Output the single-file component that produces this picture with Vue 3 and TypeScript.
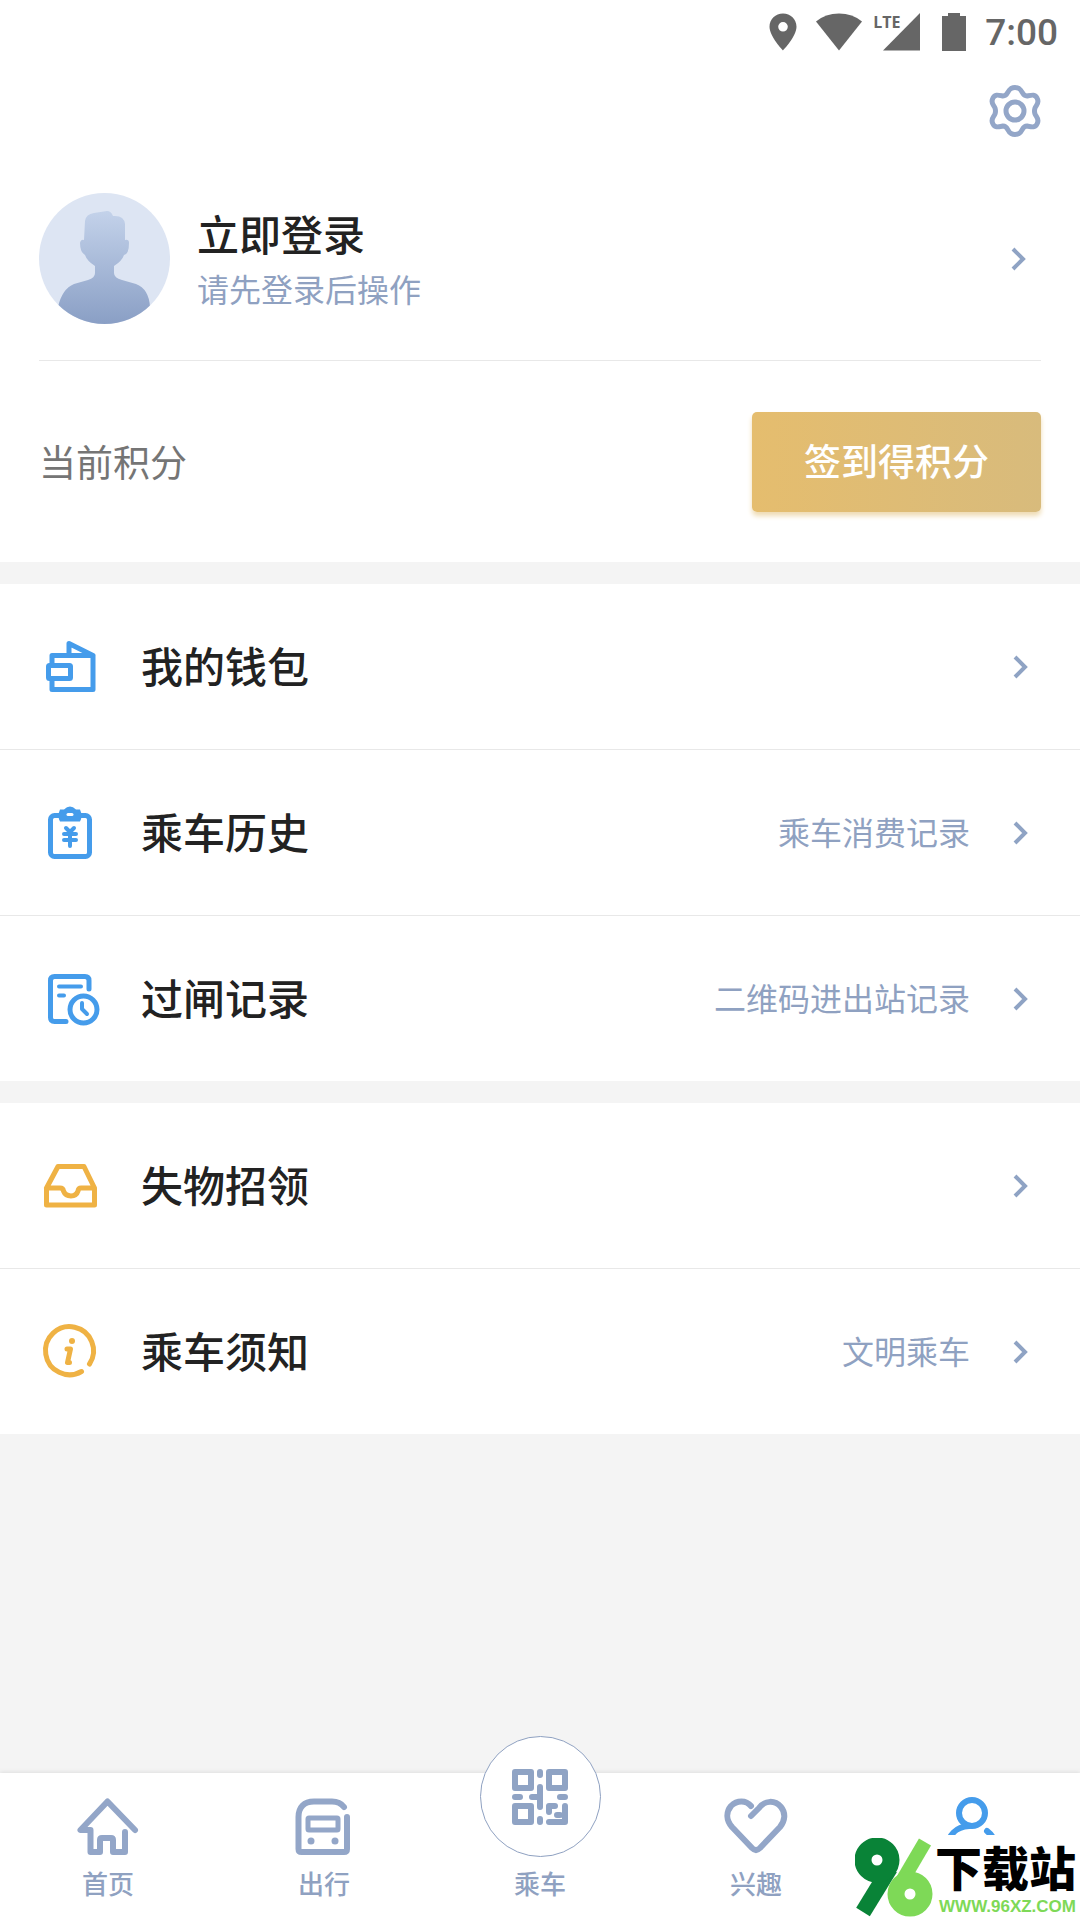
<script setup lang="ts">
interface MenuRow {
  icon: 'wallet' | 'history' | 'gate' | 'lost' | 'notice'
  title: string
  note?: string
}

const groups: MenuRow[][] = [
  [
    { icon: 'wallet', title: '我的钱包' },
    { icon: 'history', title: '乘车历史', note: '乘车消费记录' },
    { icon: 'gate', title: '过闸记录', note: '二维码进出站记录' },
  ],
  [
    { icon: 'lost', title: '失物招领' },
    { icon: 'notice', title: '乘车须知', note: '文明乘车' },
  ],
]
</script>

<template>
  <div class="app">
    <header class="status">
      <svg width="28" height="38" viewBox="0 0 28 38" aria-hidden="true">
        <path fill="#666" fill-rule="evenodd" d="M14 0.5C6.500.5.5 6.300.5 13.800.5 23.500 14 37.500 14 37.500S27.500 23.500 27.500 13.800C27.500 6.300 21.500.5 14 .5zM14 9a4.800 4.800 0 1 1 0 9.600a4.800 4.800 0 0 1 0-9.600z" />
      </svg>
      <svg class="wifi" width="46" height="38" viewBox="0 0 46 38" aria-hidden="true">
        <path fill="#666" d="M0 8.500Q9.500.5 23 .5T46 8.500L23 37.500z" />
      </svg>
      <span class="signal">
        <span class="lte">LTE</span>
        <svg width="38" height="38" viewBox="0 0 38 38" aria-hidden="true"><path fill="#666" d="M38 0V37.500H1z" /></svg>
      </span>
      <svg class="battery" width="24" height="38" viewBox="0 0 24 38" aria-hidden="true">
        <path fill="#666" d="M6 0H18V3H24V38H0V3H6z" />
      </svg>
      <span class="time">7:00</span>
    </header>

    <main class="content">
      <section class="profile">
        <div class="tools">
          <button class="plain" type="button" aria-label="设置">
            <svg width="54" height="54" viewBox="0 0 54 54" fill="none" stroke="#93a6c8" stroke-width="5" stroke-linejoin="round">
              <path d="M24 4.500Q28 2.500 32 4.500C36 7 35 12 40 12C45 11 48 10 50 14C53 19 49 21 48 24Q47 27 48 30C49 33 53 35 50 40C48 44 45 43 40 42C35 42 36 47 32 49.500Q28 51.500 24 49.500C20 47 21 42 16 42C11 43 8 44 6 40C3 35 7 33 8 30Q9 27 8 24C7 21 3 19 6 14C8 10 11 11 16 12C21 12 20 7 24 4.500z" />
              <circle cx="28" cy="27" r="9" />
            </svg>
          </button>
        </div>
        <button class="plain login" type="button">
          <svg class="avatar" width="131" height="131" viewBox="0 0 131 131" aria-hidden="true">
            <defs>
              <linearGradient id="body" x1="0" y1="0" x2="0" y2="1">
                <stop offset="0" stop-color="#c3d2ea" />
                <stop offset="1" stop-color="#8a9fc5" />
              </linearGradient>
              <clipPath id="round"><circle cx="65.500" cy="65.500" r="65.500" /></clipPath>
            </defs>
            <circle cx="65.500" cy="65.500" r="65.500" fill="#dde5f3" />
            <path clip-path="url(#round)" fill="url(#body)" d="M46 28Q47 21 55 20L68 18Q72 18 74 23Q85 22 86 31V47Q90 46 90 50Q90 61 85 62Q83 68 75 73V80Q75 85 83 87L97 91Q110 96 111 114V131H19V114Q23 96 35 91L49 87Q56 85 56 80V73Q48 68 46 62Q41 59 41 50Q42 46 45 47z" />
          </svg>
          <span class="who">
            <span class="title">立即登录</span>
            <span class="note">请先登录后操作</span>
          </span>
          <svg class="chevron" width="16" height="24" viewBox="0 0 16 24" aria-hidden="true"><path d="M2 2L12 12L2 22" /></svg>
        </button>
        <div class="points">
          <span class="points-label">当前积分</span>
          <button class="sign" type="button">签到得积分</button>
        </div>
      </section>

      <nav v-for="(group, g) in groups" :key="g" class="group" aria-label="服务">
        <a v-for="row in group" :key="row.title" class="row" href="#">
          <svg class="row-icon" width="56" height="56" viewBox="0 0 56 56" aria-hidden="true">
            <g v-if="row.icon === 'wallet'" class="blue">
              <path d="M11 26V16.500H52V50.500H11V40M28 15V4.500L52 16.500" />
              <rect x="7.500" y="26.500" width="22" height="13" rx="1" />
            </g>
            <g v-else-if="row.icon === 'history'" class="blue">
              <rect x="9.500" y="10.500" width="39" height="41" rx="4" />
              <path class="fill-blue" d="M19 4.500H23Q29-1.500 35 4.500H39Q42 11 39 16.500H19Q16 11 19 4.500z" stroke="none" />
              <path d="M27 9.500H31" stroke="#fff" stroke-width="3" />
              <path d="M25 23L29 27L33 23M23 29H35M23 35H35M29 28V41" stroke-width="4" />
            </g>
            <g v-else-if="row.icon === 'gate'" class="blue">
              <path d="M48 18V9.500Q48 5.500 44 5.500H13.500Q9.500 5.500 9.500 9.500V46.500Q9.500 50.500 13.500 50.500H25" />
              <path d="M18 15.500H40M18 24.500H23" stroke-width="4" />
              <circle cx="42.500" cy="38.500" r="13.500" />
              <path d="M41 32V38L46 43" stroke-width="4" />
            </g>
            <g v-else-if="row.icon === 'lost'" class="gold">
              <path d="M5.500 30L17 8.500H43L53.500 30V47H5.500V30H19Q22 30 22.500 33C25 39.500 35 39.500 37 33Q37.500 30 40 30H53.500" />
            </g>
            <g v-else class="gold">
              <path d="M40.500 47.500A24 24 0 1 1 48.500 40" />
              <circle cx="31" cy="17" r="3" fill="#efb244" stroke="none" />
              <path d="M26 25H29.500L26.500 38.500H28.500" />
            </g>
          </svg>
          <span class="title">{{ row.title }}</span>
          <span v-if="row.note" class="note">{{ row.note }}</span>
          <svg class="chevron" width="16" height="24" viewBox="0 0 16 24" aria-hidden="true"><path d="M2 2L12 12L2 22" /></svg>
        </a>
      </nav>
    </main>

    <nav class="tabs" aria-label="主导航">
      <a class="tab" href="#">
        <svg width="64" height="60" viewBox="0 0 64 60" aria-hidden="true">
          <path d="M59 33L31.500 4.500L4.500 33H14.500V55H24V43Q24 41 26 41H35Q37 41 37 43V55H49V35" />
        </svg>
        <span>首页</span>
      </a>
      <a class="tab" href="#">
        <svg width="64" height="60" viewBox="0 0 64 60" aria-hidden="true">
          <path d="M52 10C49 6 45 4.500 40 4.500H22C12 4.500 6.500 10 6.500 20V52Q6.500 55 9.500 55H52Q55 55 55 52V20" />
          <rect x="16" y="21" width="30" height="12" rx="1" stroke-width="5" />
          <g fill="#93a6c8" stroke="none"><circle cx="19" cy="44" r="3.500" /><circle cx="43" cy="44" r="3.500" /></g>
        </svg>
        <span>出行</span>
      </a>
      <a class="tab" href="#">
        <span class="scan">
          <svg width="56" height="56" viewBox="0 0 56 56" aria-hidden="true">
            <g class="finder">
              <rect x="3" y="3" width="16" height="16" />
              <rect x="37" y="3" width="16" height="16" />
              <rect x="3" y="37" width="16" height="16" />
              <path d="M28 3V6M28 18V38M28 50V53M3 28H8M20 28H28M48 28H53M37 43V37H43M53 37V53H37M45 46H48" />
            </g>
          </svg>
        </span>
        <span>乘车</span>
      </a>
      <a class="tab" href="#">
        <svg width="64" height="60" viewBox="0 0 64 60" aria-hidden="true">
          <path d="M27 19L35 11C41 3 51 3 57 10C62 16 61 24 56 30L36 51Q32 55 28 51L8 30C2 23 2 15 7 9C13 3 22 3 27 9" />
        </svg>
        <span>兴趣</span>
      </a>
      <a class="tab current" href="#" aria-label="我的">
        <svg width="64" height="60" viewBox="0 0 64 60" aria-hidden="true">
          <circle cx="32" cy="18" r="13" />
          <path d="M7 53C8 40 16 32 29 31M47 36Q55 42 57 53" />
        </svg>
      </a>
    </nav>

    <aside class="mark">
      <svg width="80" height="80" viewBox="0 0 80 80" role="img" aria-label="96">
        <path d="M35 30L8 74" stroke="#098337" stroke-width="16" />
        <circle cx="22" cy="22" r="14" fill="none" stroke="#098337" stroke-width="17" />
        <path d="M70 4L43 50" stroke="#7ed957" stroke-width="14" />
        <circle cx="55" cy="56" r="14" fill="none" stroke="#7ed957" stroke-width="17" />
      </svg>
      <div class="mark-text">
        <strong>下载站</strong>
        <span>WWW.96XZ.COM</span>
      </div>
    </aside>
  </div>
</template>

<style>
body {
  background: #f4f4f4;
}
</style>

<style scoped>
.app {
  position: relative;
  display: flex;
  flex-direction: column;
  min-height: 100vh;
  background: #f4f4f4;
  font-family: "Noto Sans CJK SC", sans-serif;
}
.status {
  display: flex;
  align-items: center;
  justify-content: flex-end;
  height: 64px;
  padding-right: 22px;
  background: #fff;
  color: #666;
  font-family: Roboto, sans-serif;
}
.wifi {
  margin-left: 19px;
}
.signal {
  position: relative;
  display: flex;
  margin-left: 20px;
}
.lte {
  position: absolute;
  left: -9px;
  top: -3px;
  font-family: "Liberation Sans Narrow", "Open Sans", sans-serif;
  font-size: 16px;
  font-weight: 700;
  line-height: 24px;
}
.battery {
  margin-left: 22px;
}
.time {
  margin-left: 19px;
  padding-top: 2px;
  font-size: 37px;
  font-weight: 500;
  line-height: 62px;
}
.content {
  display: flex;
  flex: 1;
  flex-direction: column;
  gap: 22px;
}
.profile {
  padding: 0 39px;
  background: #fff;
}
.plain {
  padding: 0;
  border: 0;
  background: none;
  font-family: inherit;
  text-align: left;
}
.tools {
  display: flex;
  justify-content: flex-end;
  padding-top: 20px;
}
.tools svg {
  display: block;
}
.login {
  display: flex;
  align-items: center;
  width: 100%;
  padding: 55px 14px 36px 0;
  border-bottom: 1px solid #e8e8e8;
}
.who {
  display: flex;
  flex: 1;
  flex-direction: column;
  gap: 4px;
  margin-left: 27px;
}
.title,
.note,
.points-label {
  padding-bottom: 3px;
}
.title {
  color: #222;
  font-size: 42px;
  font-weight: 500;
  line-height: 54px;
}
.note {
  color: #8fa1c1;
  font-size: 32px;
  font-weight: 400;
  line-height: 42px;
}
.chevron {
  flex: none;
  fill: none;
  stroke: #8fa3c4;
  stroke-width: 4;
}
.points {
  display: flex;
  align-items: center;
  justify-content: space-between;
  padding: 51px 0 50px;
}
.points-label {
  color: #757575;
  font-size: 37px;
  font-weight: 400;
}
.sign {
  width: 289px;
  height: 100px;
  padding: 0 0 4px;
  border: 0;
  border-radius: 5px;
  background: linear-gradient(90deg, #e5bd6e, #d8bb7c);
  box-shadow: 0 4px 5px #efdcb4;
  color: #fff;
  font-family: inherit;
  font-size: 37px;
  font-weight: 500;
}
.group {
  background: #fff;
}
.row {
  display: flex;
  align-items: center;
  height: 165px;
  padding: 0 51px 0 41px;
  text-decoration: none;
}
.row + .row {
  border-top: 1px solid #e8e8e8;
}
.row-icon {
  flex: none;
  margin-right: 44px;
  overflow: visible;
}
.row .title {
  flex: 1;
}
.row .chevron {
  margin-left: 43px;
}
.row-icon g {
  fill: none;
  stroke-width: 5;
  stroke-linecap: round;
  stroke-linejoin: round;
}
.blue {
  stroke: #459ceb;
}
.row-icon .fill-blue {
  fill: #459ceb;
}
.gold {
  stroke: #efb244;
}
.tabs {
  display: flex;
  height: 147px;
  background: #fff;
  box-shadow: 0 -1px 4px #dedede;
}
.tab {
  display: flex;
  flex: 1;
  flex-direction: column;
  align-items: center;
  justify-content: flex-end;
  gap: 8px;
  padding-bottom: 19px;
  color: #8fa1c1;
  font-size: 26px;
  font-weight: 500;
  line-height: 36px;
  text-decoration: none;
}
.tab > svg {
  fill: none;
  stroke: #93a6c8;
  stroke-width: 6;
  stroke-linecap: round;
  stroke-linejoin: round;
}
.tab.current {
  justify-content: flex-start;
  padding: 22px 0 0;
}
.tab.current > svg {
  stroke: #459ceb;
}
.scan {
  display: flex;
  flex: none;
  align-items: center;
  justify-content: center;
  box-sizing: border-box;
  width: 121px;
  height: 121px;
  border: 1px solid #8fa1c1;
  border-radius: 50%;
  background: #fff;
}
.finder {
  fill: none;
  stroke: #8fa3c4;
  stroke-width: 6;
  stroke-linecap: round;
  stroke-linejoin: round;
}
.mark {
  position: absolute;
  right: 0;
  bottom: 0;
  display: flex;
  align-items: flex-start;
  box-sizing: border-box;
  height: 85px;
  padding-right: 4px;
  background: #fff;
}
.mark svg {
  margin-top: 3px;
}
.mark-text {
  display: flex;
  flex-direction: column;
  align-items: flex-end;
  color: #7ed957;
  font-family: "Liberation Sans", sans-serif;
  font-size: 17px;
  font-weight: 700;
  line-height: 20px;
}
.mark-text strong {
  color: #000;
  font-family: "Noto Sans CJK SC", sans-serif;
  font-size: 47px;
  font-weight: 900;
  line-height: 62px;
}
</style>
